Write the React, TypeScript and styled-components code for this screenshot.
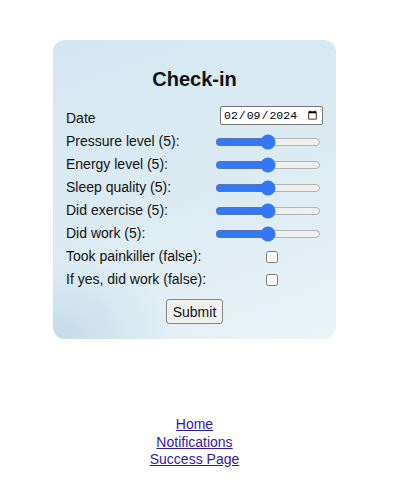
import React, { useState } from "react";
import styled, { createGlobalStyle } from "styled-components";

const Global = createGlobalStyle`
  html, body { margin: 0; padding: 0; background: #ffffff; }
  body { font-family: "Liberation Sans", Arial, sans-serif; color: #111; }
`;

const Page = styled.div`
  width: 389px;
  display: flex;
  flex-direction: column;
  align-items: center;
  padding-top: 40px;
`;

const Card = styled.form`
  box-sizing: border-box;
  width: 283px;
  padding: 26px 13px 15px 13px;
  border-radius: 12px;
  background:
    radial-gradient(ellipse 180px 120px at 0% 100%, rgba(190, 218, 230, 0.9), rgba(190, 218, 230, 0) 70%),
    linear-gradient(160deg, #d3e7f0 0%, #dcebf2 50%, #eaf3f8 100%);
  display: flex;
  flex-direction: column;
`;

const Title = styled.h2`
  margin: 0 0 14px 0;
  font-size: 20px;
  font-weight: 700;
  text-align: center;
  line-height: 26px;
`;

const Grid = styled.div`
  display: grid;
  grid-template-columns: 1fr 103px;
  row-gap: 0;
  align-items: center;
`;

const Label = styled.label`
  font-size: 14px;
  line-height: 23px;
  white-space: nowrap;
`;

const DateInput = styled.input`
  box-sizing: border-box;
  width: 103px;
  height: 19px;
  font-family: "Liberation Mono", "DejaVu Sans Mono", monospace;
  font-size: 11.5px;
  padding: 0 2px;
  border: 1px solid #767676;
  border-radius: 2px;
  background: #fff;
  justify-self: end;
  margin-bottom: 5px;
  &::-webkit-datetime-edit {
    font-family: "Liberation Mono", "DejaVu Sans Mono", monospace;
    font-size: 11.5px;
  }
`;

const Range = styled.input`
  width: 106px;
  margin: 0 2px 0 0;
  justify-self: end;
  accent-color: #3478f6;
  height: 16px;
`;

const Check = styled.input`
  justify-self: center;
  width: 12px;
  height: 12px;
  margin: 0;
`;

const SubmitRow = styled.div`
  display: flex;
  justify-content: center;
  margin-top: 8px;
`;

const SubmitButton = styled.button`
  font-family: "Liberation Sans", Arial, sans-serif;
  font-size: 14px;
  height: 25px;
  padding: 0 6px;
  border: 1px solid #858585;
  border-radius: 3px;
  background: #f0f0f0;
  color: #111;
`;

const Links = styled.nav`
  margin-top: 77px;
  display: flex;
  flex-direction: column;
  align-items: center;
`;

const NavLink = styled.a`
  font-size: 14px;
  line-height: 17.5px;
  color: #33199e;
  text-decoration: underline;
`;

const sliders = ["Pressure level", "Energy level", "Sleep quality", "Did exercise", "Did work"];

export default function App() {
  const [vals, setVals] = useState<number[]>([5, 5, 5, 5, 5]);
  const [pain, setPain] = useState(false);
  const [work, setWork] = useState(false);
  return (
    <>
      <Global />
      <Page>
        <Card onSubmit={(e) => e.preventDefault()}>
          <Title>Check-in</Title>
          <Grid>
            <Label>Date</Label>
            <DateInput type="date" defaultValue="2024-02-09" />
            {sliders.map((s, i) => (
              <React.Fragment key={s}>
                <Label>
                  {s} ({vals[i]}):
                </Label>
                <Range
                  type="range"
                  min={0}
                  max={10}
                  value={vals[i]}
                  onChange={(e) => {
                    const n = [...vals];
                    n[i] = Number(e.target.value);
                    setVals(n);
                  }}
                />
              </React.Fragment>
            ))}
            <Label>Took painkiller ({String(pain)}):</Label>
            <Check type="checkbox" checked={pain} onChange={(e) => setPain(e.target.checked)} />
            <Label>If yes, did work ({String(work)}):</Label>
            <Check type="checkbox" checked={work} onChange={(e) => setWork(e.target.checked)} />
          </Grid>
          <SubmitRow>
            <SubmitButton type="submit">Submit</SubmitButton>
          </SubmitRow>
        </Card>
        <Links>
          <NavLink href="#">Home</NavLink>
          <NavLink href="#">Notifications</NavLink>
          <NavLink href="#">Success Page</NavLink>
        </Links>
      </Page>
    </>
  );
}
